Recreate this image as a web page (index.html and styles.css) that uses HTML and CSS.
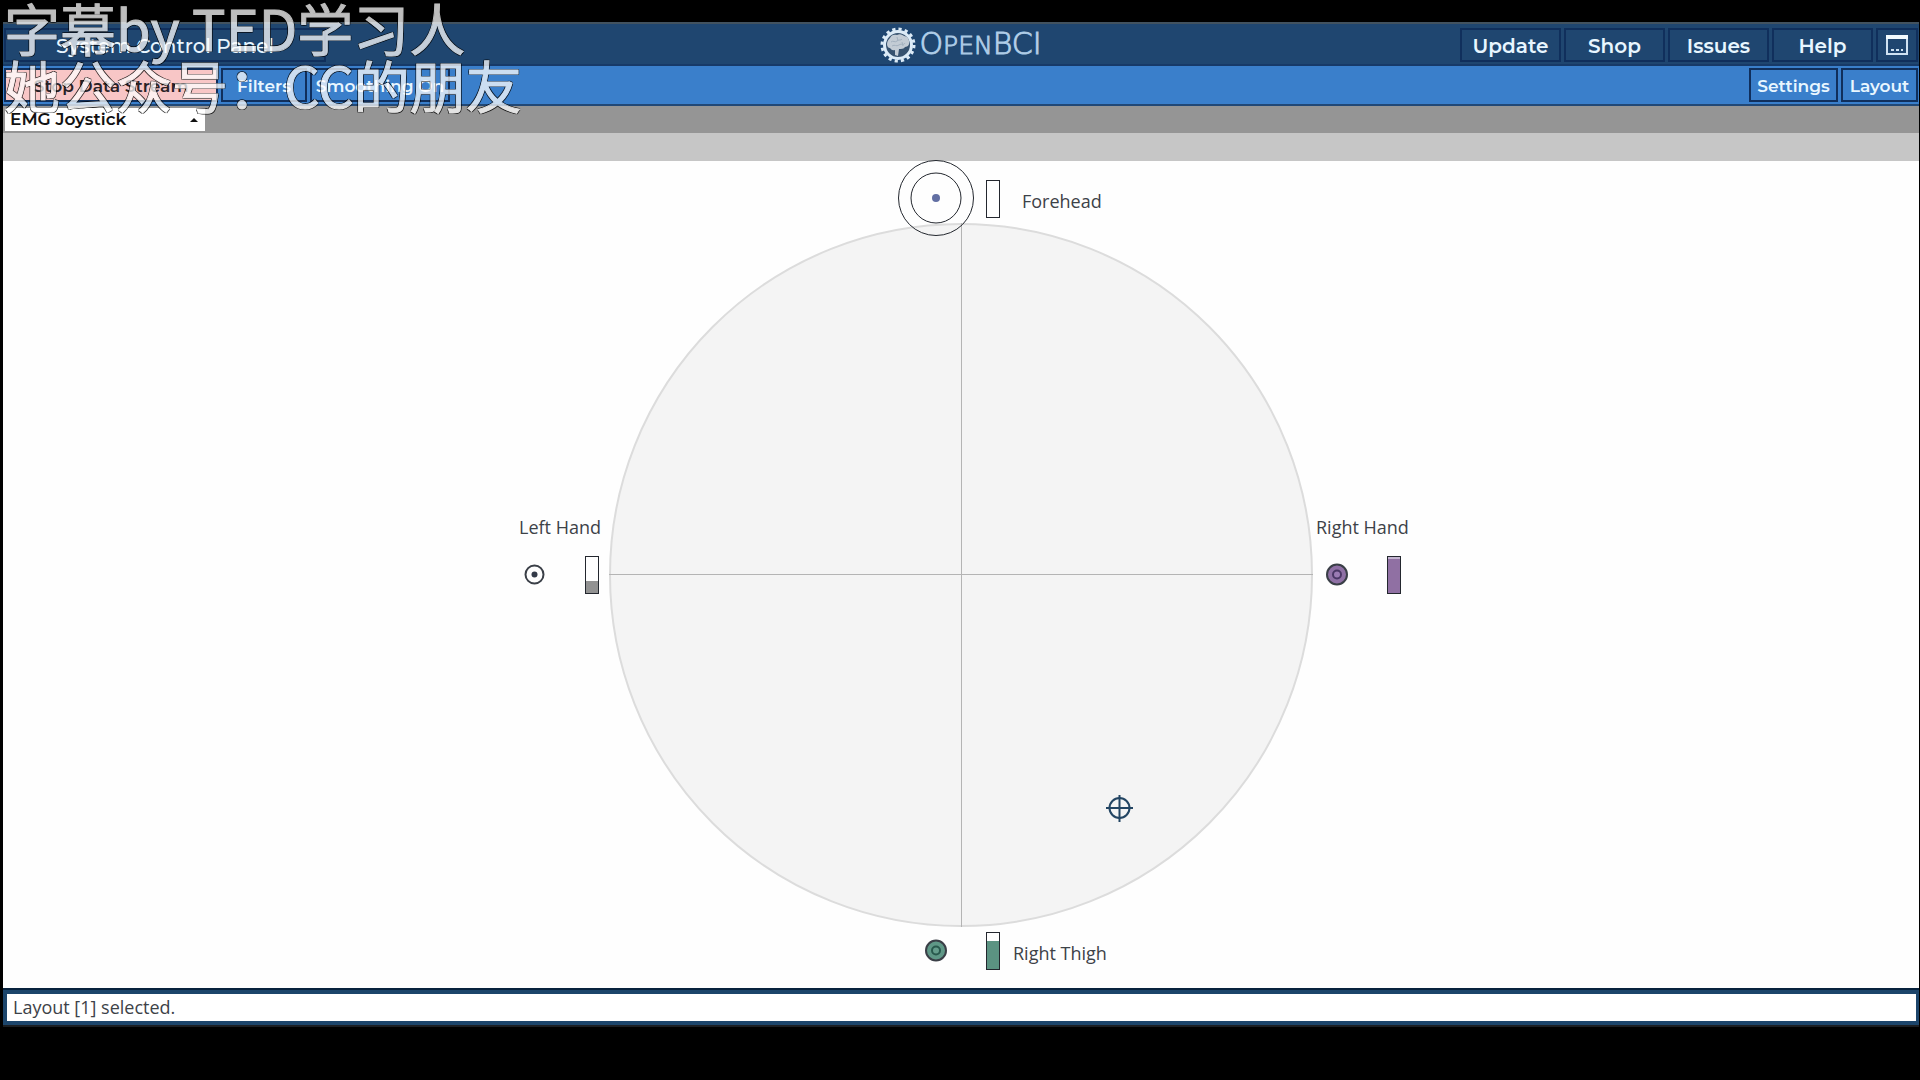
FILE: index.html
```html
<!DOCTYPE html>
<html lang="en">
<head>
<meta charset="utf-8">
<title>OpenBCI GUI</title>
<link rel="stylesheet" href="styles.css">
</head>
<body>
<div class="app">
  <header class="topbar">
    <button class="btn btn-system" type="button">System Control Panel</button>
    <div class="logo">
      <svg class="logo-mark" viewBox="0 0 36 36" aria-hidden="true">
        <circle cx="18" cy="18" r="16" fill="none" stroke="#dcebf7" stroke-width="3" stroke-dasharray="3.2 3.083"/>
        <circle cx="18" cy="18" r="13.500" fill="#36526f" stroke="#dcebf7" stroke-width="3"/>
        <path d="M7 17c0-3 2-5 3-6 1-3 4-4 7-3 3-2 6 0 7 1 3 0 5 3 5 5 1 3-1 6-4 6-1 2-4 2-6 2l-1 7-3-1v-5c-3 1-4-1-5-2-2 0-3-2-3-4z" fill="#c3ccd5"/>
        <path d="M11 15c2-2 4 1 6-1s4 0 5-2M12 19c3-2 4 1 7-1s4 1 6-2M17 10l1 4M22 15l1 4" fill="none" stroke="#a3b1bf" stroke-width="1"/>
      </svg>
      <span class="logo-text">O<span class="logo-small">PEN</span>BCI</span>
    </div>
    <nav class="links">
      <button class="btn btn-nav" type="button">Update</button>
      <button class="btn btn-nav" type="button">Shop</button>
      <button class="btn btn-nav" type="button">Issues</button>
      <button class="btn btn-nav" type="button">Help</button>
      <button class="btn btn-window" type="button" aria-label="Console">
        <svg class="window-icon" viewBox="0 0 22 22" aria-hidden="true">
          <path d="M1 1h20v18H1z" fill="none" stroke="#cfe2f2" stroke-width="2"/>
          <path d="M0 0h22v4H0z" fill="#f2fbff"/>
          <path d="M5 15h3M10 15h3M15 15h2" stroke="#cfe2f2" stroke-width="2"/>
        </svg>
      </button>
    </nav>
  </header>
  <div class="toolbar">
    <button class="btn btn-tool btn-stop" type="button">Stop Data Stream</button>
    <button class="btn btn-tool btn-filters" type="button">Filters</button>
    <button class="btn btn-tool btn-smooth" type="button">Smoothing On</button>
    <span class="spacer"></span>
    <button class="btn btn-tool btn-settings" type="button">Settings</button>
    <button class="btn btn-tool btn-layout" type="button">Layout</button>
  </div>
  <div class="widget-bar">
    <div class="picker">
      <select class="widget-select" aria-label="Widget"><option>EMG Joystick</option></select>
      <span class="caret"></span>
    </div>
  </div>
  <div class="widget-subbar"></div>
  <main class="plot-area">
    <svg class="plot" viewBox="0 0 1916 827" role="img" aria-label="EMG joystick plot">
      <circle class="field" cx="958" cy="414" r="351"/>
      <path class="axis" d="M606 413.500H1310M958.500 62V766"/>

      <circle class="outline ring" cx="933" cy="37" r="37.500"/>
      <circle class="outline ring" cx="933" cy="37" r="25"/>
      <rect class="outline bar" x="983.500" y="19.500" width="13" height="37"/>
      <circle cx="933" cy="37" r="4" fill="#626fa3"/>
      <text class="label" x="1019" y="47">Forehead</text>

      <text class="label" x="516" y="373">Left Hand</text>
      <circle class="outline" cx="531.500" cy="413.500" r="9"/>
      <circle cx="531.500" cy="413.500" r="3" fill="#333a48"/>
      <rect x="583" y="420" width="12" height="12" fill="#929292"/>
      <rect class="outline bar" x="582.500" y="395.500" width="13" height="37"/>

      <text class="label" x="1313" y="373">Right Hand</text>
      <circle class="outline fill-purple" cx="1334" cy="413.500" r="10"/>
      <circle cx="1334" cy="413.500" r="4" fill="#9b7bb3" stroke="#4a3765" stroke-width="2"/>
      <rect x="1385" y="396" width="12" height="3" fill="#c4b5d0"/>
      <rect x="1385" y="398" width="12" height="34" fill="#9070a3"/>
      <rect class="outline bar" x="1384.500" y="395.500" width="13" height="37"/>

      <circle class="outline fill-green" cx="933" cy="789.500" r="10"/>
      <circle cx="933" cy="789.500" r="4" fill="#659d8c" stroke="#28594d" stroke-width="2"/>
      <rect x="984" y="780" width="12" height="28" fill="#5b9382"/>
      <rect class="outline bar" x="983.500" y="771.500" width="13" height="37"/>
      <text class="label" x="1010" y="799">Right Thigh</text>

      <g class="cursor">
        <circle cx="1116.500" cy="647" r="10"/>
        <path d="M1103 647h27M1116.500 634v27"/>
      </g>
    </svg>
  </main>
  <footer class="statusbar"><output class="status">Layout [1] selected.</output></footer>
</div>
<div class="subtitle" lang="zh-CN">字幕by TED学习人<br>她公众号：CC的朋友</div>
</body>
</html>
```
FILE: styles.css
```css
* { box-sizing: border-box; }

body {
  margin: 0;
  background: #000;
  font-family: "Open Sans", "Noto Sans", sans-serif;
}

.app {
  display: flex;
  flex-direction: column;
  min-height: 100vh;
  padding: 22px 1px 53px 3px;
}

.btn {
  flex: none;
  height: 34px;
  padding: 1px 0 0;
  border: 2px solid #102f5c;
  border-radius: 0;
  background: transparent;
  color: #e8f6ff;
  font-family: Montserrat, "Noto Sans", sans-serif;
  font-weight: 600;
  white-space: nowrap;
}

.topbar {
  display: grid;
  grid-template-columns: 1fr auto 1fr;
  align-items: center;
  height: 44px;
  padding: 2px 1px 0 1px;
  border-top: 2px solid #42525f;
  border-bottom: 2px solid #173a68;
  background: #1f4670;
}

.btn-system {
  width: 322px;
  font-size: 20px;
  font-weight: 500;
}

.logo {
  display: flex;
  align-items: center;
  gap: 3px;
}

.logo-mark {
  width: 36px;
  height: 36px;
}

.logo-text {
  color: #cfe6fa;
  font-family: "DejaVu Sans", sans-serif;
  font-size: 30px;
  font-weight: 200;
  line-height: 32px;
  -webkit-text-stroke: 1px #a9c8e4;
}

.logo-small { font-size: 25px; }

.links {
  display: flex;
  justify-content: flex-end;
  gap: 3px;
}

.btn-nav {
  width: 101px;
  font-size: 20px;
}

.btn-window {
  display: flex;
  align-items: center;
  justify-content: center;
  width: 42px;
}

.window-icon {
  width: 22px;
  height: 22px;
}

.toolbar {
  display: flex;
  align-items: center;
  gap: 3px;
  height: 40px;
  padding: 0 1px;
  border-bottom: 2px solid #214876;
  background: #3a7fcb;
}

.btn-tool { font-size: 17px; }

.btn-stop {
  width: 214px;
  background: #f8c6c6;
  color: #2a2226;
}

.btn-filters { width: 86px; }
.btn-smooth { width: 140px; }
.btn-settings { width: 89px; }
.btn-layout { width: 77px; }
.spacer { flex: 1; }

.widget-bar {
  height: 27px;
  padding: 2px;
  background: #959595;
}

.picker {
  position: relative;
  width: 200px;
}

.widget-select {
  display: block;
  width: 100%;
  height: 23px;
  padding: 0 5px;
  border: 0;
  border-radius: 0;
  appearance: none;
  background: #fff;
  color: #111;
  font-family: Montserrat, "Noto Sans", sans-serif;
  font-size: 17px;
  font-weight: 600;
  line-height: 23px;
}

.caret {
  position: absolute;
  top: 10px;
  right: 7px;
  border: 4px solid transparent;
  border-top: 0;
  border-bottom-color: #111;
  pointer-events: none;
}

.widget-subbar {
  height: 28px;
  background: #c6c6c6;
}

.plot-area {
  flex: 1;
  display: flex;
  background: #fefefe;
}

.plot {
  display: block;
  width: 100%;
  overflow: visible;
}

.field {
  fill: #f4f4f4;
  stroke: #dcdcdc;
  stroke-width: 2;
}

.axis {
  fill: none;
  stroke: #b4b4b4;
  stroke-width: 1;
}

.outline {
  fill: none;
  stroke: #3a3f47;
  stroke-width: 2;
}

.ring,
.bar { stroke: #23272e; stroke-width: 1; }

.fill-purple { fill: #8f70a5; }
.fill-green { fill: #5f9887; }

.label {
  fill: #3d4248;
  font-size: 18px;
}

.cursor {
  fill: none;
  stroke: #234563;
  stroke-width: 2;
}

.statusbar {
  padding: 4px 3px 4px 4px;
  border-top: 2px solid #08223d;
  border-bottom: 2px solid #1b1e22;
  background: #1c456b;
}

.status {
  display: block;
  padding: 0 6px;
  background: #fff;
  color: #3d4248;
  font-size: 18px;
  line-height: 27px;
}

.subtitle {
  position: absolute;
  top: -2px;
  left: 4px;
  color: #fff;
  font-family: "Noto Sans CJK SC", sans-serif;
  font-size: 56px;
  line-height: 57px;
  opacity: 0.74;
  pointer-events: none;
  white-space: nowrap;
  -webkit-text-stroke: 1px #fff;
  text-shadow: 1px 0 #000, -1px 0 #000, 0 1px #000, 0 -1px #000,
    1px 1px #000, -1px 1px #000, 1px -1px #000, -1px -1px #000;
}
```
